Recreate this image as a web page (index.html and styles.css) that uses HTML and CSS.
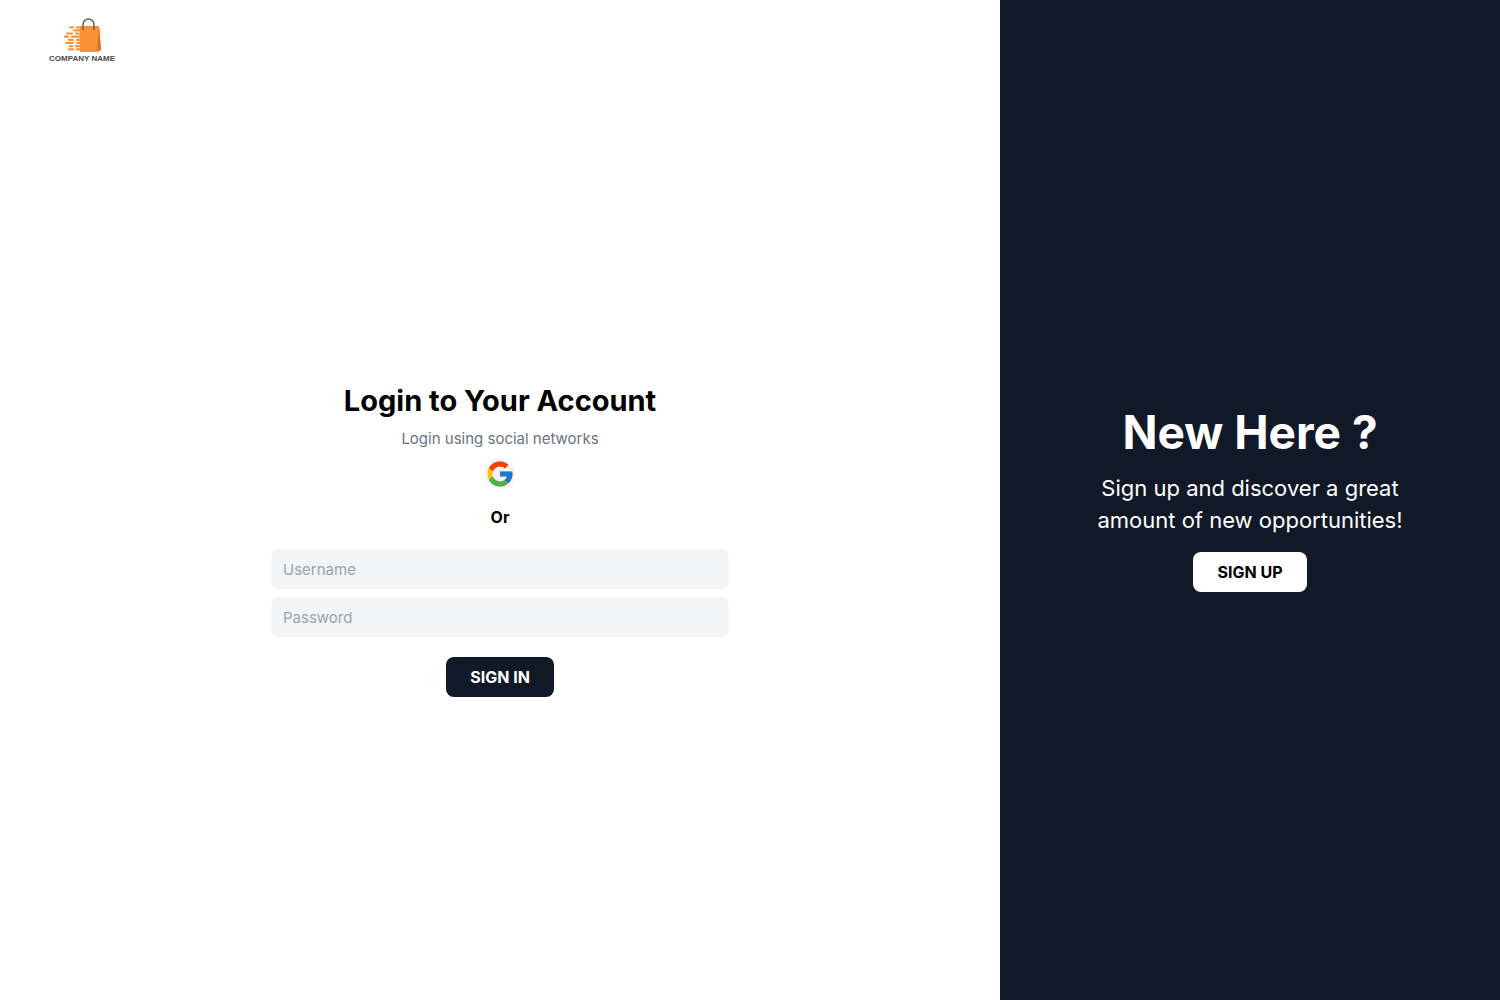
FILE: index.html
```html
<!DOCTYPE html>
<html lang="en">
<head>
  <meta charset="utf-8">
  <meta name="viewport" content="width=device-width, initial-scale=1">
  <title>Login</title>
  <link rel="stylesheet" href="styles.css">
</head>
<body>
  <div class="page">
    <div class="login">
      <header class="header">
        <a class="logo" href="#" aria-label="Company name">
          <svg viewBox="0 0 72 48" width="72" height="48">
            <path d="M34 10h19l2 24-4 2H34z" fill="#fb923a"/>
            <path d="M53 10l2 24-4 2z" fill="#d9702a"/>
            <g fill="none" stroke="#fb923a" stroke-width="2.2" stroke-linecap="round">
              <path d="M24 11.3h3M31 11.3h5M28 14.4h8M21 17.5h5M30 17.5h6M19 20.7h3M26 20.7h10M23 23.9h4M31 23.9h5M20 27h7M31 27h5M24 30.2h2M30 30.2h6M23 33.4h4M31 33.4h5"/>
            </g>
            <path d="M37 14V8.500a5.500 5.500 0 0 1 11 0V14" fill="none" stroke="#7d5848" stroke-width="1.500"/>
            <text class="logo-text" x="36" y="45" text-anchor="middle">COMPANY NAME</text>
          </svg>
        </a>
      </header>
      <main class="login-body">
        <form class="form">
          <h1 class="title">Login to Your Account</h1>
          <p class="subtitle">Login using social networks</p>
          <button class="google" type="button" aria-label="Login with Google">
            <svg viewBox="0 0 48 48" width="30" height="30">
              <path fill="#FFC107" d="M43.611 20.083H42V20H24v8h11.303c-1.649 4.657-6.08 8-11.303 8-6.627 0-12-5.373-12-12s5.373-12 12-12c3.059 0 5.842 1.154 7.961 3.039l5.657-5.657C34.046 6.053 29.268 4 24 4 12.955 4 4 12.955 4 24s8.955 20 20 20 20-8.955 20-20c0-1.341-.138-2.65-.389-3.917z"/>
              <path fill="#FF3D00" d="M6.306 14.691l6.571 4.819C14.655 15.108 18.961 12 24 12c3.059 0 5.842 1.154 7.961 3.039l5.657-5.657C34.046 6.053 29.268 4 24 4 16.318 4 9.656 8.337 6.306 14.691z"/>
              <path fill="#4CAF50" d="M24 44c5.166 0 9.86-1.977 13.409-5.192l-6.19-5.238C29.211 35.091 26.715 36 24 36c-5.202 0-9.619-3.317-11.283-7.946l-6.522 5.025C9.505 39.556 16.227 44 24 44z"/>
              <path fill="#1976D2" d="M43.611 20.083H42V20H24v8h11.303c-.792 2.237-2.231 4.166-4.087 5.571l6.193 5.237C36.971 39.205 44 34 44 24c0-1.341-.138-2.65-.389-3.917z"/>
            </svg>
          </button>
          <p class="or">Or</p>
          <div class="fields">
            <input class="field" type="text" name="username" placeholder="Username" aria-label="Username">
            <input class="field" type="password" name="password" placeholder="Password" aria-label="Password">
          </div>
          <button class="button button-dark" type="submit">SIGN IN</button>
        </form>
      </main>
    </div>
    <aside class="signup">
      <h2 class="signup-title">New Here ?</h2>
      <p class="signup-text">Sign up and discover a great amount of new opportunities!</p>
      <button class="button button-light" type="button">SIGN UP</button>
    </aside>
  </div>
</body>
</html>
```
FILE: styles.css
```css
* {
  box-sizing: border-box;
}

body {
  margin: 0;
  font-family: Inter, "Liberation Sans", sans-serif;
  font-size: 15px;
  line-height: 24px;
  color: #000;
  background: #fff;
}

h1,
h2,
p {
  margin: 0;
}

.page {
  display: grid;
  grid-template-columns: 2fr 1fr;
  min-height: 100vh;
}

.login {
  display: flex;
  flex-direction: column;
}

.header {
  display: flex;
  align-items: center;
  height: 80px;
  padding: 0 46px;
}

.logo {
  display: block;
  height: 48px;
}

.logo-text {
  font-family: "Liberation Sans", sans-serif;
  font-size: 8px;
  font-weight: 700;
  fill: #4a4a4c;
}

.login-body {
  display: flex;
  flex: 1;
  align-items: center;
  justify-content: center;
  padding: 0 16px;
}

.form {
  display: flex;
  flex-direction: column;
  align-items: center;
  width: 100%;
  max-width: 458px;
}

.title {
  margin-bottom: 8px;
  font-size: 29px;
  font-weight: 700;
  line-height: 36px;
  text-align: center;
}

.subtitle {
  margin-bottom: 8px;
  color: #6b7280;
}

.google {
  width: 30px;
  height: 30px;
  margin-bottom: 16px;
  padding: 0;
  border: 0;
  border-radius: 50%;
  background: #f3f4f6;
  cursor: pointer;
}

.google svg {
  display: block;
}

.or {
  margin-bottom: 20px;
  font-size: 16px;
  font-weight: 700;
}

.fields {
  display: grid;
  gap: 8px;
  width: 100%;
  margin-bottom: 20px;
}

.field {
  width: 100%;
  height: 40px;
  padding: 8px 12px;
  border: 0;
  border-radius: 8px;
  background: #f3f4f6;
  font: inherit;
}

.field::placeholder {
  color: #9ca3af;
  opacity: 1;
}

.button {
  padding: 8px 24px;
  border: 0;
  border-radius: 8px;
  font: inherit;
  font-size: 16px;
  font-weight: 700;
  cursor: pointer;
}

.button-dark {
  color: #fff;
  background: #111827;
}

.button-light {
  color: #000;
  background: #fff;
}

.signup {
  display: flex;
  flex-direction: column;
  align-items: center;
  justify-content: center;
  gap: 16px;
  padding: 0 80px;
  color: #fff;
  background: #111827;
  text-align: center;
}

.signup-title {
  font-size: 46px;
  font-weight: 700;
  line-height: 48px;
}

.signup-text {
  max-width: 320px;
  font-size: 22px;
  line-height: 32px;
}
```
